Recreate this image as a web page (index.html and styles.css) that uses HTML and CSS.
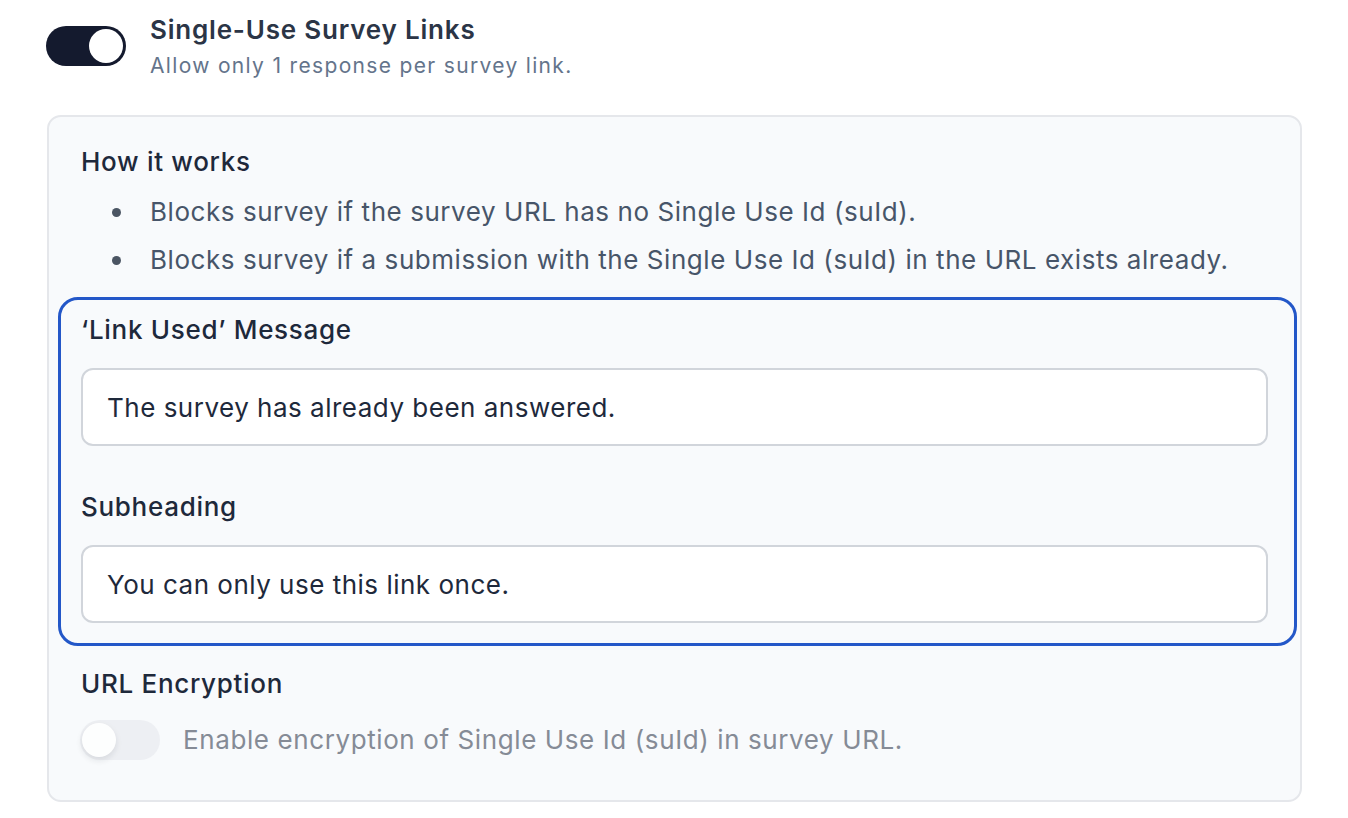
FILE: index.html
```html
<!DOCTYPE html>
<html lang="en">
<head>
<meta charset="utf-8">
<title>Single-Use Survey Links</title>
<link rel="stylesheet" href="styles.css">
</head>
<body>
  <div class="page">
    <div class="header">
      <button class="switch switch-on" type="button" aria-pressed="true"><span class="knob"></span></button>
      <div class="header-text">
        <div class="title">Single-Use Survey Links</div>
        <div class="subtitle">Allow only 1 response per survey link.</div>
      </div>
    </div>

    <div class="card">
      <div class="heading">How it works</div>
      <ul class="bullets">
        <li>Blocks survey if the survey URL has no Single Use Id (suId).</li>
        <li>Blocks survey if a submission with the Single Use Id (suId) in the URL exists already.</li>
      </ul>

      <div class="highlight">
        <div class="heading">‘Link Used’ Message</div>
        <input class="field" type="text" value="The survey has already been answered.">
        <div class="heading heading-spaced">Subheading</div>
        <input class="field" type="text" value="You can only use this link once.">
      </div>

      <div class="heading heading-url">URL Encryption</div>
      <div class="encrypt-row">
        <button class="switch switch-off" type="button" aria-pressed="false" disabled><span class="knob"></span></button>
        <div class="encrypt-text">Enable encryption of Single Use Id (suId) in survey URL.</div>
      </div>
    </div>
  </div>
</body>
</html>
```

FILE: styles.css
```css
* { box-sizing: border-box; }

html, body {
  margin: 0;
  padding: 0;
  background: #ffffff;
}

body {
  font-family: Inter, "Noto Sans", "Liberation Sans", sans-serif;
  color: #1e293b;
}

.page {
  padding: 0 46px 0 47px;
  width: 1348px;
}

.header {
  display: flex;
  align-items: flex-start;
  gap: 24px;
  padding-top: 13px;
  height: 81px;
}

.switch {
  border: none;
  padding: 0;
  margin: 0;
  flex: none;
  width: 80px;
  height: 40px;
  border-radius: 20px;
  position: relative;
  cursor: pointer;
}

.switch-on {
  background: #141a2e;
  margin-top: 13px;
  margin-left: -1px;
}

.switch-on .knob {
  position: absolute;
  top: 3px;
  right: 3px;
  width: 34px;
  height: 34px;
  border-radius: 50%;
  background: #ffffff;
}

.switch-off {
  background: #eceef2;
  opacity: 0.85;
  cursor: default;
  margin-left: -1px;
}

.switch-off .knob {
  position: absolute;
  top: 3px;
  left: 2px;
  width: 34px;
  height: 34px;
  border-radius: 50%;
  background: #ffffff;
  box-shadow: 0 3px 6px rgba(15, 23, 42, 0.12);
}

.header-text {
  display: flex;
  flex-direction: column;
}

.title {
  font-size: 26px;
  line-height: 34px;
  font-weight: 600;
  letter-spacing: 0.8px;
  color: #2b3546;
}

.subtitle {
  margin-top: 4px;
  font-size: 21px;
  line-height: 30px;
  letter-spacing: 1.33px;
  color: #64748b;
}

.card {
  margin-top: 34px;
  width: 1255px;
  border: 2px solid #e5e7eb;
  border-radius: 14px;
  background: #f8fafc;
  padding: 27px 32px 40px 32px;
}

.heading {
  font-size: 26px;
  line-height: 36px;
  font-weight: 500;
  letter-spacing: 0.7px;
  color: #1e293b;
}

.bullets {
  margin: 8px 0 0 0;
  padding: 0;
  list-style: none;
  color: #475569;
  font-size: 26px;
  line-height: 48px;
  letter-spacing: 0.55px;
}

.bullets li {
  display: flex;
  align-items: center;
}

.bullets li::before {
  content: "";
  flex: none;
  width: 9px;
  height: 9px;
  border-radius: 50%;
  background: #4b5563;
  margin: 0 29px 0 31px;
}

.highlight {
  margin: 13px -29px 0 -23px;
  border: 3px solid #2357c8;
  border-radius: 20px;
  padding: 12px 26px 20px 20px;
}

.field {
  display: block;
  width: 100%;
  height: 78px;
  margin-top: 20px;
  border: 2px solid #d1d5db;
  border-radius: 12px;
  background: #ffffff;
  padding: 0 24px;
  font-family: Inter, "Noto Sans", "Liberation Sans", sans-serif;
  font-size: 26px;
  letter-spacing: 0.5px;
  color: #1e293b;
  outline: none;
}

.heading-spaced {
  margin-top: 43px;
}

.heading-url {
  margin-top: 20px;
}

.encrypt-row {
  display: flex;
  align-items: center;
  gap: 23px;
  margin-top: 18px;
}

.encrypt-text {
  font-size: 26px;
  line-height: 40px;
  letter-spacing: 0.6px;
  color: #858b96;
}
```
